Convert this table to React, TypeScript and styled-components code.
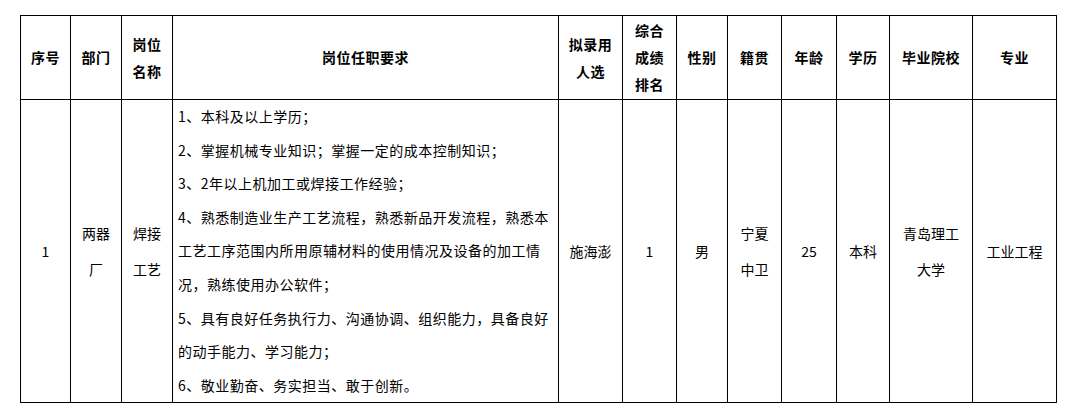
import React from "react";
import styled, { createGlobalStyle } from "styled-components";

const Global = createGlobalStyle`
  html, body { margin: 0; padding: 0; background: #fff; }
  body { font-family: "Noto Sans CJK SC", "Noto Sans", sans-serif; color: #000; }
`;

const Page = styled.div`
  padding: 15px 0 0 20px;
`;

const Table = styled.table`
  border-collapse: collapse;
  table-layout: fixed;
  width: 1037px;
`;

const HeadCell = styled.th`
  border: 1px solid #000;
  height: 83px;
  padding: 0 2px;
  font-size: 14px;
  font-weight: 700;
  letter-spacing: 0.5px;
  line-height: 27px;
  text-align: center;
  vertical-align: middle;
`;

const DataCell = styled.td`
  border: 1px solid #000;
  padding: 0 4px;
  font-size: 14px;
  line-height: 36px;
  text-align: center;
  vertical-align: middle;
`;

const DutyCell = styled.td`
  border: 1px solid #000;
  padding: 0 2px 0 5px;
  font-size: 14px;
  letter-spacing: 0.5px;
  line-height: 33.6px;
  text-align: left;
  vertical-align: middle;
`;

const Line = styled.p`
  margin: 0;
`;

const widths = [50, 51, 51, 386, 64, 54, 51, 54, 55, 53, 83, 84];

const headers: React.ReactNode[] = [
  "序号",
  "部门",
  <>岗位<br />名称</>,
  "岗位任职要求",
  <>拟录用<br />人选</>,
  <>综合<br />成绩<br />排名</>,
  "性别",
  "籍贯",
  "年龄",
  "学历",
  "毕业院校",
  "专业",
];

const duties = [
  "1、本科及以上学历；",
  "2、掌握机械专业知识；掌握一定的成本控制知识；",
  "3、2年以上机加工或焊接工作经验；",
  "4、熟悉制造业生产工艺流程，熟悉新品开发流程，熟悉本工艺工序范围内所用原辅材料的使用情况及设备的加工情况，熟练使用办公软件；",
  "5、具有良好任务执行力、沟通协调、组织能力，具备良好的动手能力、学习能力；",
  "6、敬业勤奋、务实担当、敢于创新。",
];

export default function App() {
  return (
    <>
      <Global />
      <Page>
        <Table>
          <colgroup>
            {widths.map((w, i) => (
              <col key={i} style={{ width: w }} />
            ))}
          </colgroup>
          <thead>
            <tr>
              {headers.map((h, i) => (
                <HeadCell key={i}>{h}</HeadCell>
              ))}
            </tr>
          </thead>
          <tbody>
            <tr>
              <DataCell>1</DataCell>
              <DataCell>两器<br />厂</DataCell>
              <DataCell>焊接<br />工艺</DataCell>
              <DutyCell>
                {duties.map((d, i) => (
                  <Line key={i}>{d}</Line>
                ))}
              </DutyCell>
              <DataCell>施海澎</DataCell>
              <DataCell>1</DataCell>
              <DataCell>男</DataCell>
              <DataCell>宁夏<br />中卫</DataCell>
              <DataCell>25</DataCell>
              <DataCell>本科</DataCell>
              <DataCell>青岛理工<br />大学</DataCell>
              <DataCell>工业工程</DataCell>
            </tr>
          </tbody>
        </Table>
      </Page>
    </>
  );
}
